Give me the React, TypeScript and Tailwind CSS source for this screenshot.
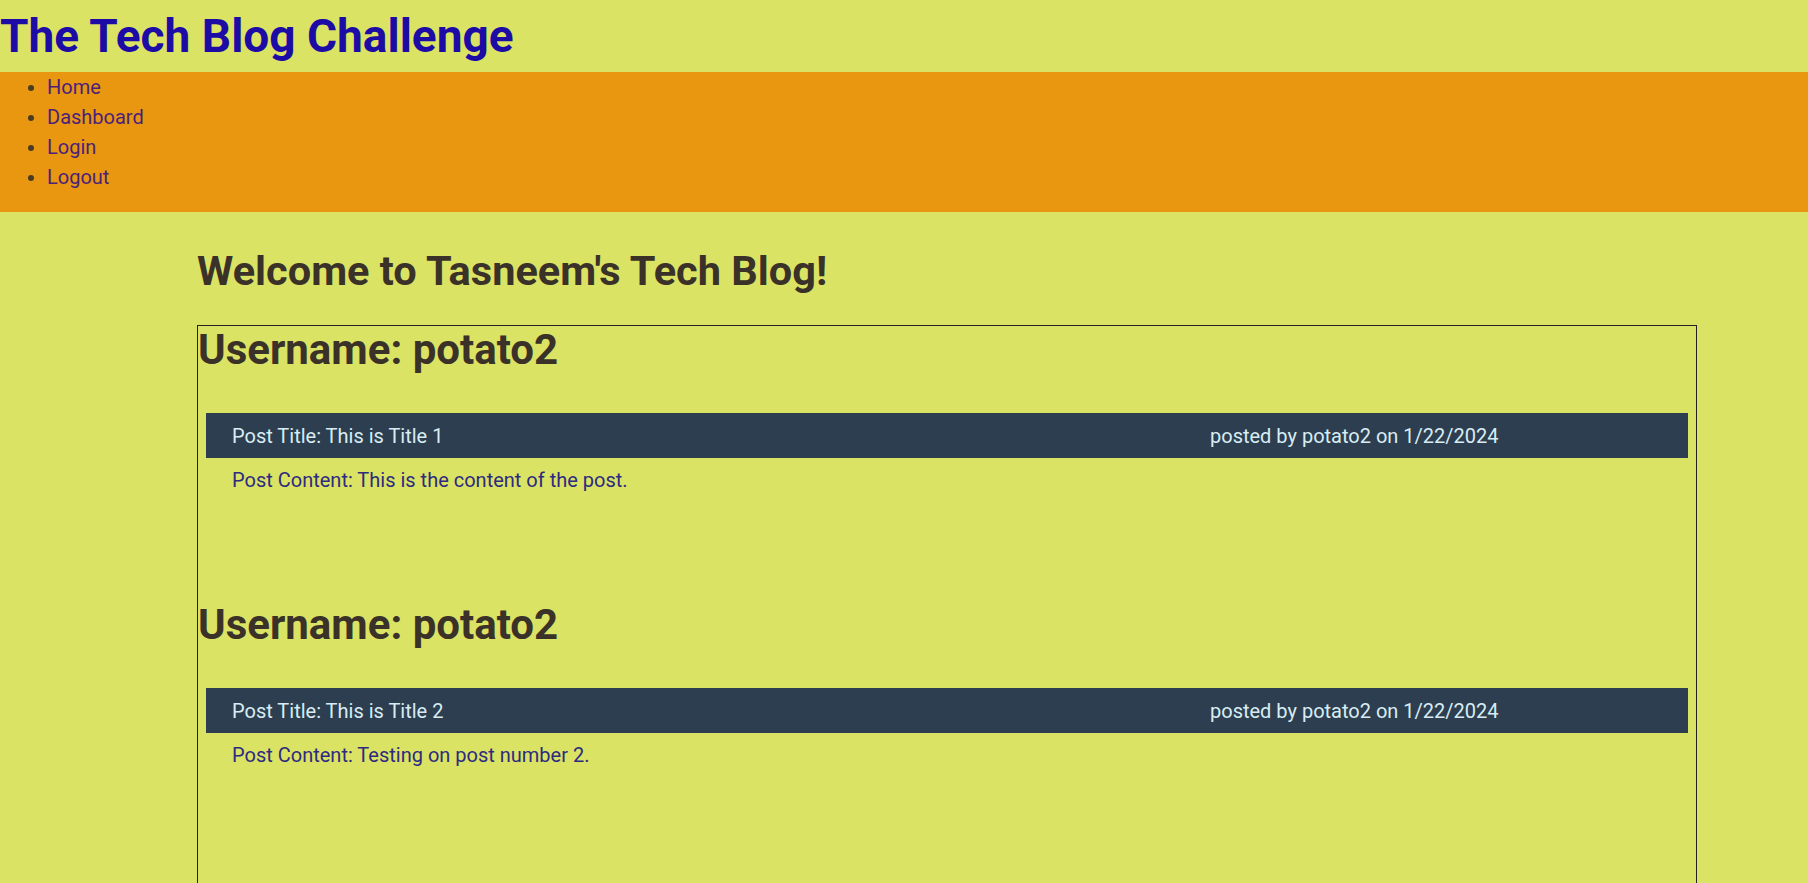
const posts = [
  { id: 1, user: "potato2", title: "This is Title 1", content: "This is the content of the post.", date: "1/22/2024" },
  { id: 2, user: "potato2", title: "This is Title 2", content: "Testing on post number 2.", date: "1/22/2024" },
];

const navLinks = ["Home", "Dashboard", "Login", "Logout"];

function PostCard(props: { user: string; title: string; content: string; date: string }) {
  const { user, title, content, date } = props;
  return (
    <section className="h-[275px]">
      <h2 className="m-0 text-[42px] leading-[48px] font-bold text-[#3a3228]">Username: {user}</h2>
      <div className="mx-[8px] mt-[39px] grid h-[45px] grid-cols-[978px_1fr] items-center bg-[#2d3e50] px-[26px] text-[20px] text-[#d8edf3]">
        <span>Post Title: {title}</span>
        <span>
          posted by {user} on {date}
        </span>
      </div>
      <p className="mt-[7px] pl-[34px] text-[20px] leading-[30px] text-[#2e2a80]">Post Content: {content}</p>
    </section>
  );
}

export default function App() {
  return (
    <div className="min-h-[883px] bg-[#dae364] font-['Roboto','Liberation_Sans',sans-serif]">
      <header className="h-[72px] pt-[9px]">
        <h1 className="text-[46px] leading-[55px] font-bold text-[#1c0ca5]">The Tech Blog Challenge</h1>
      </header>

      <nav className="bg-[#e99710] pb-[20px]">
        <ul className="list-disc pl-[47px] text-[20px] leading-[30px] text-[#4b1f7a] marker:text-[#4a3b22]">
          {navLinks.map((link) => (
            <li key={link}>
              <a href="#">{link}</a>
            </li>
          ))}
        </ul>
      </nav>

      <main className="ml-[197px] w-[1500px] pt-[35px]">
        <h2 className="text-[41.5px] leading-[48px] font-bold text-[#3a3228]">Welcome to Tasneem's Tech Blog!</h2>
        <div className="mt-[30px] border border-[#222] pb-[40px]">
          {posts.map((p) => (
            <PostCard key={p.id} user={p.user} title={p.title} content={p.content} date={p.date} />
          ))}
        </div>
      </main>
    </div>
  );
}
